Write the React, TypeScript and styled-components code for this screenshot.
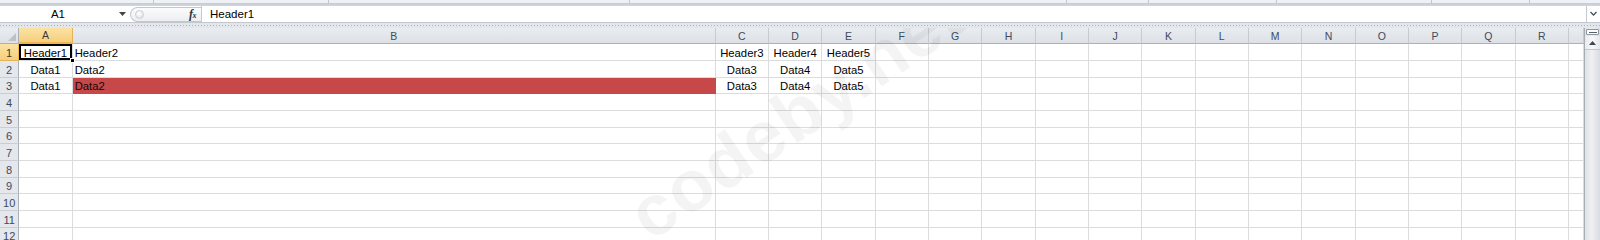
import React from "react";
import styled, { createGlobalStyle } from "styled-components";

const Global = createGlobalStyle`
  html, body { margin: 0; padding: 0; width: 1600px; height: 240px; overflow: hidden; background: #fff; }
  #root { width: 1600px; height: 240px; }
  * { box-sizing: border-box; }
`;

const Window = styled.div`
  width: 1600px;
  height: 240px;
  display: flex;
  flex-direction: column;
  overflow: hidden;
  font-family: "Liberation Sans", Arial, sans-serif;
  color: #000;
`;

const RibbonEdge = styled.div`
  height: 6px;
  flex-shrink: 0;
  display: flex;
  background: linear-gradient(#eef1f5 0, #eef1f5 3px, #c6cad1 3px, #d3d6db 6px);
`;

const RibbonGroup = styled.div<{ $w: number }>`
  width: ${(p) => p.$w}px;
  height: 3px;
  flex-shrink: 0;
  border-right: 1px solid #c3c8d0;
`;

const FormulaRow = styled.div`
  height: 17px;
  flex-shrink: 0;
  display: flex;
  align-items: stretch;
  background: #fff;
  border-bottom: 1px solid #c3c8cf;
`;

const NameBox = styled.div`
  width: 130px;
  flex-shrink: 0;
  display: flex;
  align-items: center;
  font-size: 11.5px;
`;

const NameText = styled.span`
  flex: 1;
  text-align: center;
`;

const DropArrow = styled.span`
  width: 14px;
  display: flex;
  align-items: center;
  justify-content: center;
  padding-right: 2px;
`;

const Pill = styled.div`
  width: 71px;
  flex-shrink: 0;
  margin-top: 1px;
  display: flex;
  align-items: center;
  border: 1px solid #c2c7ce;
  border-right: none;
  border-radius: 8px 0 0 8px;
  background: linear-gradient(#fbfcfd, #eceef1);
`;

const Knob = styled.span`
  width: 9px;
  height: 9px;
  margin-left: 4px;
  border-radius: 50%;
  border: 1px solid #c9cdd3;
  background: radial-gradient(circle at 40% 35%, #ffffff, #d9dce1);
`;

const Spacer = styled.span`
  flex: 1;
`;

const Fx = styled.span`
  font-family: "Liberation Serif", "Times New Roman", serif;
  font-style: italic;
  font-weight: bold;
  font-size: 12px;
  color: #333;
  padding-right: 5px;
  letter-spacing: -0.5px;
  & small {
    font-size: 8px;
  }
`;

const FormulaInput = styled.div`
  flex: 1;
  display: flex;
  align-items: center;
  padding-left: 8px;
  border-left: 1px solid #c5cad1;
  font-size: 11.5px;
`;

const ExpandButton = styled.div`
  width: 14px;
  flex-shrink: 0;
  display: flex;
  align-items: center;
  justify-content: center;
  border-left: 1px solid #c5cad1;
`;

const GapBand = styled.div`
  height: 5px;
  flex-shrink: 0;
  background-color: #e3e6ea;
  background-image: repeating-linear-gradient(to right, #aeb3bb 0 1px, transparent 1px 3px);
  background-size: 100% 1px;
  background-position: 0 2px;
  background-repeat: no-repeat;
`;

const Sheet = styled.div`
  flex: 1;
  min-height: 0;
  display: flex;
  position: relative;
  overflow: hidden;
`;

const Grid = styled.div`
  flex: 1;
  min-width: 0;
  display: grid;
  grid-template-columns: 19.33px 53.33px 643px repeat(16, 53.33px) 1fr;
  grid-template-rows: 16.33px repeat(12, 16.67px);
  overflow: hidden;
`;

const Corner = styled.div`
  position: relative;
  background: linear-gradient(#e9ecf0, #dde1e6);
  border-right: 1px solid #abb1b9;
  border-bottom: 1px solid #abb1b9;
  &::after {
    content: "";
    position: absolute;
    right: 2px;
    bottom: 2px;
    width: 0;
    height: 0;
    border-left: 8px solid transparent;
    border-bottom: 8px solid #bcc1c8;
  }
`;

const ColHeader = styled.div<{ $active?: boolean }>`
  display: flex;
  align-items: center;
  justify-content: center;
  font-size: 10.5px;
  color: ${(p) => (p.$active ? "#3a3a3a" : "#3e4b5b")};
  background: ${(p) =>
    p.$active ? "linear-gradient(#fbe2a4, #f6cf7c)" : "linear-gradient(#e9ecf0, #dde1e6)"};
  border-right: 1px solid ${(p) => (p.$active ? "#e2b35a" : "#c7cbd1")};
  border-bottom: ${(p) => (p.$active ? "2px solid #eeb552" : "1px solid #abb1b9")};
  white-space: nowrap;
  overflow: hidden;
`;

const RowHeader = styled.div<{ $active?: boolean }>`
  display: flex;
  align-items: flex-end;
  justify-content: center;
  font-size: 11px;
  line-height: 13px;
  color: ${(p) => (p.$active ? "#3a3a3a" : "#3e4b5b")};
  background: ${(p) => (p.$active ? "linear-gradient(#fbe2a4, #f6cf7c)" : "#e4e7eb")};
  border-right: 1px solid ${(p) => (p.$active ? "#eeb552" : "#abb1b9")};
  border-bottom: 1px solid ${(p) => (p.$active ? "#e2b35a" : "#cacdd3")};
`;

const Cell = styled.div<{ $align?: "left" | "center"; $fill?: string }>`
  position: relative;
  display: flex;
  align-items: flex-end;
  justify-content: ${(p) => (p.$align === "left" ? "flex-start" : "center")};
  padding: 0 2px;
  font-size: 11.3px;
  line-height: 13px;
  white-space: nowrap;
  background: ${(p) => p.$fill ?? "#fff"};
  color: ${(p) => (p.$fill ? "#1a0606" : "#000")};
  border-right: 1px solid ${(p) => p.$fill ?? "#dadcdd"};
  border-bottom: 1px solid ${(p) => p.$fill ?? "#dadcdd"};
`;

const Selection = styled.div`
  position: absolute;
  inset: 0;
  border: 2px solid #000;
  pointer-events: none;
  z-index: 2;
`;

const FillHandle = styled.div`
  position: absolute;
  right: -3px;
  bottom: -3px;
  width: 5px;
  height: 5px;
  background: #000;
  border: 1px solid #fff;
  z-index: 3;
`;

const ScrollBar = styled.div`
  width: 16px;
  flex-shrink: 0;
  display: flex;
  flex-direction: column;
  border-left: 1px solid #a7adb5;
  background: linear-gradient(to right, #dfe2e6, #eef0f2 45%, #d9dce1);
`;

const SplitBox = styled.div`
  height: 6px;
  margin: 1px 1px 0;
  border: 1px solid #8d95a0;
  border-radius: 1px;
  background: #fbfbfc;
  display: flex;
  align-items: center;
  justify-content: center;
  &::after {
    content: "";
    width: 8px;
    height: 1px;
    background: #5a6270;
  }
`;

const UpButton = styled.div`
  height: 14px;
  margin-top: 1px;
  display: flex;
  align-items: center;
  justify-content: center;
  border-bottom: 1px solid #c2c7ce;
  background: linear-gradient(to right, #e9ebee, #f7f8f9 50%, #e4e7ea);
`;

const Track = styled.div`
  flex: 1;
`;

const Watermark = styled.div`
  position: absolute;
  left: 796px;
  top: 86px;
  transform: translate(-50%, -50%) rotate(-34deg);
  font-family: "Liberation Sans", Arial, sans-serif;
  font-weight: bold;
  font-size: 72px;
  letter-spacing: 1px;
  color: rgba(0, 0, 0, 0.045);
  white-space: nowrap;
  pointer-events: none;
  z-index: 5;
`;

const COLS = ["A", "B", "C", "D", "E", "F", "G", "H", "I", "J", "K", "L", "M", "N", "O", "P", "Q", "R", "S"];

type CellData = { text: string; align?: "left" | "center"; fill?: string };

const DATA: Record<number, Record<string, CellData>> = {
  1: {
    A: { text: "Header1" },
    B: { text: "Header2", align: "left" },
    C: { text: "Header3" },
    D: { text: "Header4" },
    E: { text: "Header5" },
  },
  2: {
    A: { text: "Data1" },
    B: { text: "Data2", align: "left" },
    C: { text: "Data3" },
    D: { text: "Data4" },
    E: { text: "Data5" },
  },
  3: {
    A: { text: "Data1" },
    B: { text: "Data2", align: "left", fill: "#c64849" },
    C: { text: "Data3" },
    D: { text: "Data4" },
    E: { text: "Data5" },
  },
};

const RIBBON_SEPARATORS = [154, 329, 630, 1067, 1149, 1277, 1432, 1530];

export default function App() {
  const groups: number[] = [];
  let prev = 0;
  RIBBON_SEPARATORS.forEach((x) => {
    groups.push(x - prev);
    prev = x;
  });

  const rows = Array.from({ length: 12 }, (_, i) => i + 1);

  return (
    <>
      <Global />
      <Window>
        <RibbonEdge>
          {groups.map((w, i) => (
            <RibbonGroup key={i} $w={w} />
          ))}
        </RibbonEdge>
        <FormulaRow>
          <NameBox>
            <NameText>A1</NameText>
            <DropArrow>
              <svg width="7" height="4" viewBox="0 0 7 4">
                <path d="M0 0 L7 0 L3.5 4 Z" fill="#444" />
              </svg>
            </DropArrow>
          </NameBox>
          <Pill>
            <Knob />
            <Spacer />
            <Fx>
              f<small>x</small>
            </Fx>
          </Pill>
          <FormulaInput>Header1</FormulaInput>
          <ExpandButton>
            <svg width="7" height="6" viewBox="0 0 7 6">
              <path d="M0.5 1 L3.5 4 L6.5 1" fill="none" stroke="#4a5260" strokeWidth="1.3" />
            </svg>
          </ExpandButton>
        </FormulaRow>
        <GapBand />
        <Sheet>
          <Grid>
            <Corner />
            {COLS.map((c) => (
              <ColHeader key={c} $active={c === "A"}>
                {c === "S" ? "" : c}
              </ColHeader>
            ))}
            {rows.map((r) => (
              <React.Fragment key={r}>
                <RowHeader $active={r === 1}>{r}</RowHeader>
                {COLS.map((c) => {
                  const d = DATA[r]?.[c];
                  const selected = r === 1 && c === "A";
                  return (
                    <Cell key={c} $align={d?.align} $fill={d?.fill}>
                      {d?.text}
                      {selected && (
                        <>
                          <Selection />
                          <FillHandle />
                        </>
                      )}
                    </Cell>
                  );
                })}
              </React.Fragment>
            ))}
          </Grid>
          <ScrollBar>
            <SplitBox />
            <UpButton>
              <svg width="7" height="4" viewBox="0 0 7 4">
                <path d="M0 4 L7 4 L3.5 0 Z" fill="#3f4652" />
              </svg>
            </UpButton>
            <Track />
          </ScrollBar>
          <Watermark>codeby.net</Watermark>
        </Sheet>
      </Window>
    </>
  );
}
